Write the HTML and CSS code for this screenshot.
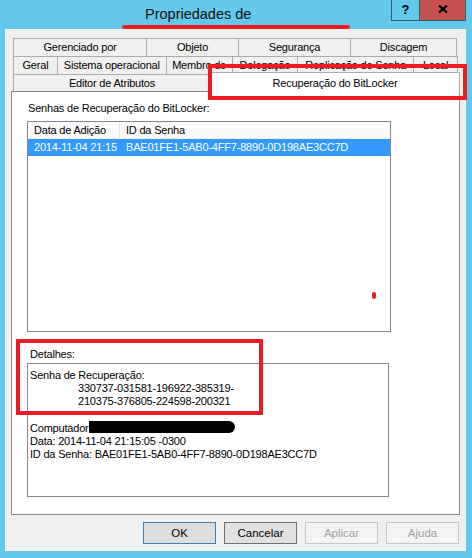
FILE: index.html
```html
<!DOCTYPE html>
<html lang="pt-BR">
<head>
    <meta charset="UTF-8">
    <title>Propriedades de</title>
    <link rel="stylesheet" href="styles.css">
</head>
<body>
    <div class="titlebar">
        <span class="title">Propriedades de</span>
        <div class="caption">
            <span class="cap-help">?</span>
            <span class="cap-close">
                <svg width="10" height="8" viewBox="0 0 10 8"><path d="M1 0.5 L9 7.5 M9 0.5 L1 7.5" stroke="#000" stroke-width="2.2" fill="none"/></svg>
            </span>
        </div>
        <span class="mark-line"></span>
    </div>

    <div class="dialog">
        <div class="tabs">
            <div class="tab-row">
                <div class="tab w134">Gerenciado por</div>
                <div class="tab w92">Objeto</div>
                <div class="tab w112">Segurança</div>
                <div class="tab w107">Discagem</div>
            </div>
            <div class="tab-row">
                <div class="tab w44">Geral</div>
                <div class="tab w109">Sistema operacional</div>
                <div class="tab w66">Membro de</div>
                <div class="tab w66">Delegação</div>
                <div class="tab w116">Replicação de Senha</div>
                <div class="tab w44">Local</div>
            </div>
            <div class="tab-row">
                <div class="tab w198">Editor de Atributos</div>
                <div class="tab tab-active">Recuperação do BitLocker</div>
            </div>
        </div>

        <div class="panel">
            <div class="label">Senhas de Recuperação do BitLocker:</div>
            <div class="listbox">
                <div class="list-head">
                    <div class="col col-date">Data de Adição</div>
                    <div class="col col-id">ID da Senha</div>
                </div>
                <div class="list-row selected">
                    <div class="col col-date">2014-11-04 21:15</div>
                    <div class="col col-id">BAE01FE1-5AB0-4FF7-8890-0D198AE3CC7D</div>
                </div>
                <span class="red-dot"></span>
            </div>

            <div class="label label-details">Detalhes:</div>
            <div class="details">
                <div>Senha de Recuperação:</div>
                <div class="key">330737-031581-196922-385319-</div>
                <div class="key">210375-376805-224598-200321</div>
                <div>&nbsp;</div>
                <div>Computador<span class="redacted"></span></div>
                <div>Data: 2014-11-04 21:15:05 -0300</div>
                <div>ID da Senha: BAE01FE1-5AB0-4FF7-8890-0D198AE3CC7D</div>
            </div>
        </div>

        <div class="buttons">
            <button class="btn btn-default">OK</button>
            <button class="btn">Cancelar</button>
            <button class="btn" disabled>Aplicar</button>
            <button class="btn" disabled>Ajuda</button>
        </div>

        <!-- marcações em vermelho -->
        <span class="mark mark-tab"></span>
        <span class="mark mark-details"></span>
    </div>
</body>
</html>
```

FILE: styles.css
```css
* {
    margin: 0;
    padding: 0;
    box-sizing: border-box;
}

body {
    background: #64c8ea;
    font-family: "Liberation Sans", Arial, sans-serif;
    font-size: 11px;
    letter-spacing: -0.2px;
    color: #000;
    width: 472px;
    height: 558px;
    overflow: hidden;
}

/* Title bar */
.titlebar {
    position: relative;
    height: 29px;
    display: flex;
}

.title {
    margin-left: 145px;
    margin-top: 5px;
    font-size: 14.5px;
    letter-spacing: 0;
    line-height: 18px;
    color: #111;
}

.caption {
    margin-left: auto;
    margin-right: 6px;
    display: flex;
    height: 21px;
    border: 1px solid #2f5f75;
    border-top: none;
}

.cap-help {
    width: 28px;
    text-align: center;
    font-weight: bold;
    font-size: 13px;
    letter-spacing: 0;
    line-height: 19px;
    border-right: 1px solid #2f5f75;
}

.cap-close {
    width: 45px;
    background: #c75050;
    display: flex;
    align-items: center;
    justify-content: center;
    padding-bottom: 3px;
}

.mark-line {
    position: absolute;
    left: 122px;
    top: 25px;
    width: 228px;
    height: 4px;
    border-radius: 2px;
    background: #ed1c24;
}

/* Dialog body */
.dialog {
    position: relative;
    margin-left: 5px;
    width: 461px;
    height: 522px;
    background: #f0f0f0;
    padding: 9px 6px 0 6px;
}

.tabs {
    margin: 0 2px;
}

.tab-row {
    display: flex;
    margin-top: -1px;
}

.tab-row:first-child {
    margin-top: 0;
}

.tab {
    height: 19px;
    line-height: 17px;
    text-align: center;
    border: 1px solid #acacac;
    margin-left: -1px;
    background: #f0f0f0;
    white-space: nowrap;
    overflow: hidden;
}

.tab:first-child {
    margin-left: 0;
}

.w44 { width: 45px; }
.w66 { width: 67px; }
.w92 { width: 93px; }
.w107 { width: 107px; }
.w109 { width: 110px; }
.w112 { width: 113px; }
.w116 { width: 117px; }
.w134 { width: 134px; }
.w198 { width: 198px; }

.tab-active {
    flex: 1;
    position: relative;
    z-index: 2;
    height: 22px;
    margin: -2px -2px -2px -1px;
    background: #fff;
    border-bottom: none;
    line-height: 20px;
}

.panel {
    position: relative;
    margin-top: -2px;
    height: 424px;
    background: #fff;
    border: 1px solid #898989;
    padding: 9px 15px 0 15px;
}

.label {
    line-height: 15px;
    padding-left: 1px;
}

.listbox {
    position: relative;
    margin-top: 5px;
    width: 364px;
    height: 211px;
    border: 1px solid #828790;
}

.list-head,
.list-row {
    display: flex;
    height: 17px;
    line-height: 16px;
}

.list-head {
    background: #fafafa;
    border-bottom: 1px solid #ececec;
}

.list-head .col-date {
    border-right: 1px solid #e3e3e3;
}

.col {
    padding-left: 6px;
    white-space: nowrap;
}

.col-date {
    width: 92px;
}

.col-id {
    flex: 1;
}

.list-row.selected {
    background: #3399ff;
    color: #fff;
}

.red-dot {
    position: absolute;
    left: 344px;
    top: 170px;
    width: 4px;
    height: 7px;
    border-radius: 2px;
    background: #ed1c24;
}

.label-details {
    margin-top: 15px;
    padding-left: 3px;
}

.details {
    margin-top: 1px;
    width: 362px;
    height: 134px;
    border: 1px solid #828790;
    padding: 5px 2px;
    line-height: 13px;
}

.details .key {
    padding-left: 48px;
}

.redacted {
    display: inline-block;
    vertical-align: -1px;
    width: 146px;
    height: 12px;
    background: #000;
    border-radius: 0 6px 6px 0;
}

/* Buttons */
.buttons {
    display: flex;
    justify-content: flex-end;
    gap: 8px;
    margin-top: 7px;
    margin-right: 1px;
}

.btn {
    width: 73px;
    height: 22px;
    font-family: "Liberation Sans", Arial, sans-serif;
    font-size: 11.5px;
    color: #000;
    background: #e1e1e1;
    border: 1px solid #707070;
}

.btn-default {
    border-color: #3c7fb1;
    background: #dddddd;
}

.btn:disabled {
    color: #a0a0a0;
    background: #f4f4f4;
    border-color: #c6c6c6;
}

/* Red annotations */
.mark {
    position: absolute;
    border: 4px solid #ed1c24;
    z-index: 5;
}

.mark-tab {
    left: 203px;
    top: 35px;
    width: 259px;
    height: 36px;
}

.mark-details {
    left: 11px;
    top: 310px;
    width: 247px;
    height: 76px;
}
```
